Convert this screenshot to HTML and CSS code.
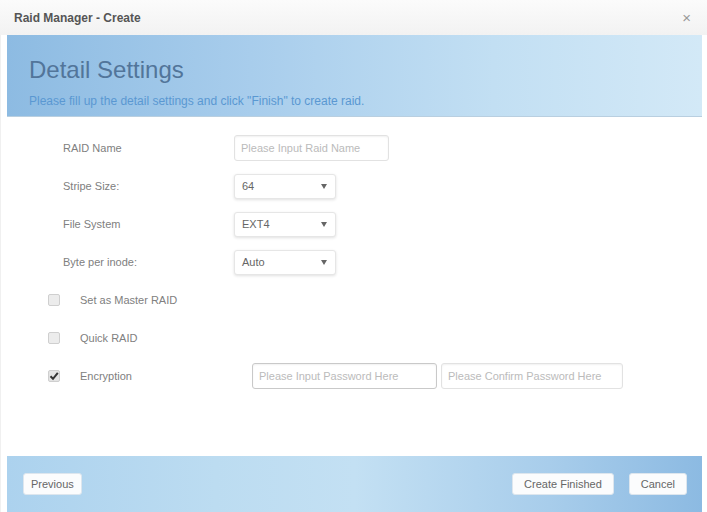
FILE: index.html
```html
<!DOCTYPE html>
<html lang="en">
<head>
  <meta charset="UTF-8"/>
  <meta name="viewport" content="width=device-width, initial-scale=1.0"/>
  <title>Raid Manager - Create</title>
  <link rel="stylesheet" href="styles.css">
</head>
<body>
  <div class="modal">
    <div class="titlebar">
      <span class="title">Raid Manager - Create</span>
      <span class="close">&times;</span>
    </div>

    <div class="modal-inner">
      <div class="banner">
        <h1>Detail Settings</h1>
        <p>Please fill up the detail settings and click "Finish" to create raid.</p>
      </div>

      <div class="form">
        <div class="row">
          <label class="label">RAID Name</label>
          <input class="text-input name-input" type="text" placeholder="Please Input Raid Name">
        </div>
        <div class="row">
          <label class="label">Stripe Size:</label>
          <div class="select"><span>64</span><span class="arrow"></span></div>
        </div>
        <div class="row">
          <label class="label">File System</label>
          <div class="select"><span>EXT4</span><span class="arrow"></span></div>
        </div>
        <div class="row">
          <label class="label">Byte per inode:</label>
          <div class="select"><span>Auto</span><span class="arrow"></span></div>
        </div>

        <div class="checks">
          <div class="check-row">
            <span class="box"></span>
            <span class="check-label">Set as Master RAID</span>
          </div>
          <div class="check-row">
            <span class="box"></span>
            <span class="check-label">Quick RAID</span>
          </div>
          <div class="check-row">
            <span class="box checked">
              <svg width="10" height="10" viewBox="0 0 10 10"><path d="M1.5 5.2 L4 7.8 L8.8 1.8" fill="none" stroke="#333" stroke-width="2"/></svg>
            </span>
            <span class="check-label wide">Encryption</span>
            <div class="password">
              <input class="text-input pw-input focused" type="password" placeholder="Please Input Password Here">
              <input class="text-input pw-input" type="password" placeholder="Please Confirm Password Here">
            </div>
          </div>
        </div>
      </div>

      <div class="footer">
        <button class="btn">Previous</button>
        <div class="footer-right">
          <button class="btn wide-btn">Create Finished</button>
          <button class="btn wide-btn">Cancel</button>
        </div>
      </div>
    </div>
  </div>
</body>
</html>
```

FILE: styles.css
```css
body { margin:0; padding:0; background:#fff; font-family:"Liberation Sans", Arial, sans-serif; }
.modal { width:707px; height:512px; overflow:hidden; background:#fff; }

.titlebar { height:35px; display:flex; align-items:center; justify-content:space-between; padding:0 16px 0 14px; background:linear-gradient(#fbfbfb, #f2f2f2); box-sizing:border-box; }
.title { font-size:12px; font-weight:bold; color:#555; }
.close { font-size:15px; color:#999; }

.modal-inner { padding:0 5px 0 6px; border-left:1px solid #f0f0f0; }

.banner { height:82px; box-sizing:border-box; padding:23px 22px 0; background:linear-gradient(90deg, #8dbbe2 0%, #a8cdec 35%, #c2dff3 70%, #d3e9f7 100%); border-bottom:1px solid #b9cfe0; }
.banner h1 { margin:0; font-size:24px; line-height:24px; font-weight:normal; color:#52759a; }
.banner p { margin:12px 0 0; font-size:12px; line-height:14px; color:#5a98d2; }

.form { padding:18px 0 0 56px; height:339px; box-sizing:border-box; }
.row { display:flex; align-items:center; height:26px; margin-bottom:12px; }
.label { width:171px; font-size:11px; color:#808080; }

.text-input { height:26px; box-sizing:border-box; border:1px solid #e2e2e2; border-radius:3px; padding:0 6px; font-family:inherit; font-size:11px; color:#555; background:#fff; box-shadow:inset 0 1px 2px rgba(0,0,0,0.06); outline:none; }
.text-input::placeholder { color:#bbb; }
.name-input { width:155px; }

.select { width:102px; height:25px; box-sizing:border-box; display:flex; align-items:center; justify-content:space-between; padding:0 8px 0 7px; border:1px solid #e6e6e6; border-radius:3px; background:#fff; box-shadow:0 1px 3px rgba(0,0,0,0.12); font-size:11px; color:#666; }
.arrow { width:0; height:0; border-left:3px solid transparent; border-right:3px solid transparent; border-top:5px solid #666; }

.checks { margin:8px 0 0 -15px; }
.check-row { display:flex; align-items:center; height:26px; margin-bottom:12px; }
.box { width:12px; height:12px; box-sizing:border-box; border:1px solid #cfcfcf; border-radius:2px; background:#ececec; margin-right:20px; display:flex; align-items:center; justify-content:center; }
.box.checked { background:#e4e4e4; }
.check-label { font-size:11px; color:#808080; }
.check-label.wide { width:172px; }
.password { display:flex; gap:4px; }
.pw-input { width:185px; }
.pw-input + .pw-input { width:182px; }
.pw-input.focused { border-color:#c9c9c9; }

.footer { height:56px; box-sizing:border-box; display:flex; justify-content:space-between; align-items:flex-start; padding:17px 15px 0 16px; background:linear-gradient(90deg, #acd2ee 0%, #bcdcf1 30%, #c3e0f3 50%, #a8cdeb 78%, #8cbae2 100%); }
.footer-right { display:flex; gap:15px; }
.btn { height:22px; padding:0 7px; border:1px solid #dde6ee; border-radius:3px; background:#fbfcfd; font-family:inherit; font-size:11px; color:#666; }
.wide-btn { padding:0 11px; }
```
